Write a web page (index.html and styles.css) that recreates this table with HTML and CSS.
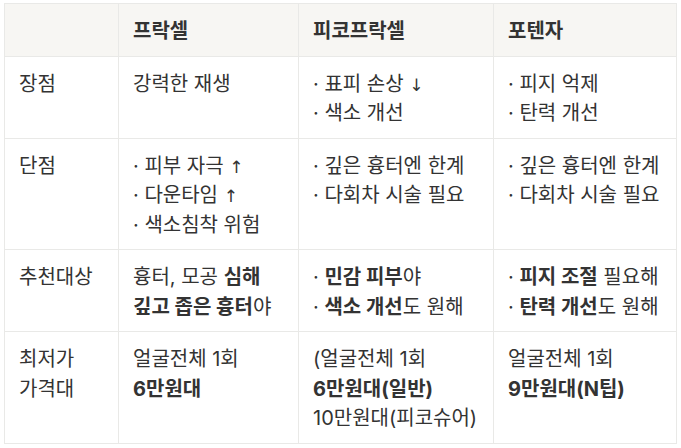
FILE: index.html
```html
<!DOCTYPE html>
<html lang="ko">
<head>
<meta charset="utf-8">
<link rel="stylesheet" href="styles.css">
</head>
<body>
<div class="wrap">
<table class="cmp">
  <colgroup>
    <col class="c1"><col class="c2"><col class="c3"><col class="c4">
  </colgroup>
  <thead>
    <tr><th></th><th>프락셀</th><th>피코프락셀</th><th>포텐자</th></tr>
  </thead>
  <tbody>
    <tr>
      <td>장점</td>
      <td>강력한 재생</td>
      <td>· 표피 손상 <span class="arr">↓&#xFE0E;</span><br>· 색소 개선</td>
      <td>· 피지 억제<br>· 탄력 개선</td>
    </tr>
    <tr>
      <td>단점</td>
      <td>· 피부 자극 <span class="arr">↑&#xFE0E;</span><br>· 다운타임 <span class="arr">↑&#xFE0E;</span><br>· 색소침착 위험</td>
      <td>· 깊은 흉터엔 한계<br>· 다회차 시술 필요</td>
      <td>· 깊은 흉터엔 한계<br>· 다회차 시술 필요</td>
    </tr>
    <tr>
      <td>추천대상</td>
      <td>흉터, 모공 <b>심해<br>깊고 좁은 흉터</b>야</td>
      <td>· <b>민감 피부</b>야<br>· <b>색소 개선</b>도 원해</td>
      <td>· <b>피지 조절</b> 필요해<br>· <b>탄력 개선</b>도 원해</td>
    </tr>
    <tr>
      <td>최저가<br>가격대</td>
      <td>얼굴전체 1회<br><b>6만원대</b></td>
      <td>(얼굴전체 1회<br><b>6만원대(일반)</b><br>10만원대(피코슈어)</td>
      <td>얼굴전체 1회<br><b>9만원대(N팁)</b></td>
    </tr>
  </tbody>
</table>
</div>
</body>
</html>
```

FILE: styles.css
```css
html, body {
  margin: 0;
  padding: 0;
  background: #ffffff;
}
.wrap {
  padding: 3px 4px;
}
.cmp {
  border-collapse: collapse;
  table-layout: fixed;
  width: 672px;
  font-family: Inter, "Noto Sans CJK KR", sans-serif;
  font-size: 20px;
  line-height: 29.5px;
  color: #333333;
}
.c1 { width: 114px; }
.c2 { width: 180px; }
.c3 { width: 195px; }
.c4 { width: 183px; }
.cmp th, .cmp td {
  border: 1px solid #e9e9e7;
  padding: 13px 14px 9px 14px;
  text-align: left;
  vertical-align: top;
}
.cmp th {
  background: #f7f6f3;
  font-weight: 600;
}
.cmp td b {
  font-weight: 700;
}
.arr {
  font-family: "DejaVu Sans", sans-serif;
  font-size: 17px;
  line-height: 20px;
  color: #333333;
}
```
